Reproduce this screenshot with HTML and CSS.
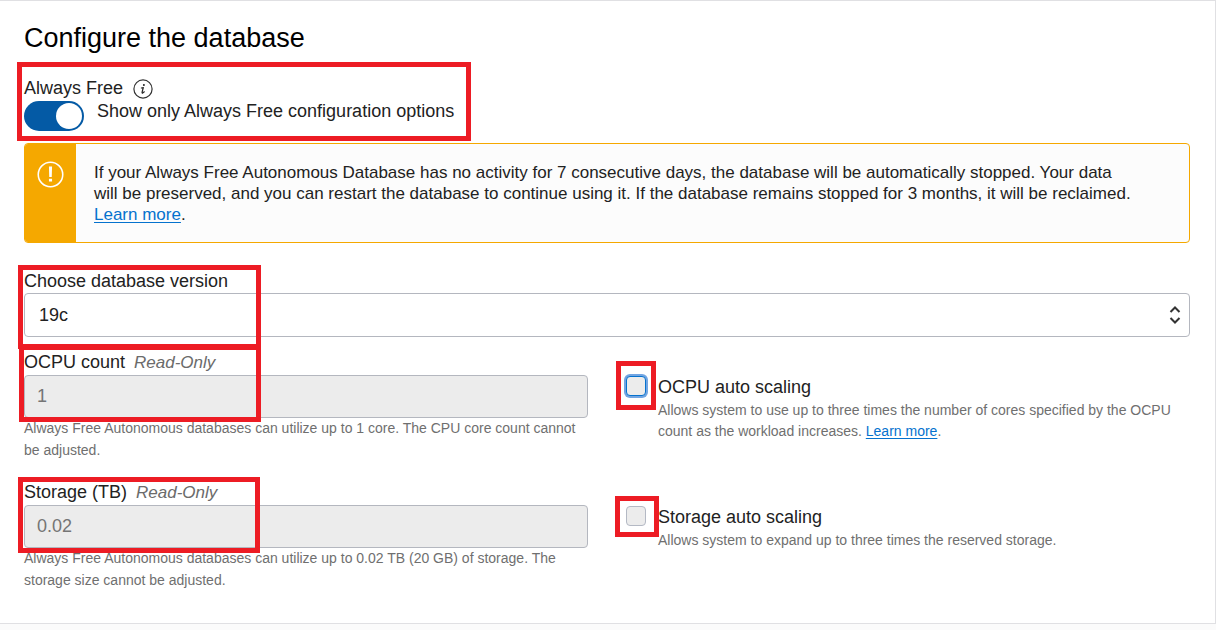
FILE: index.html
```html
<!DOCTYPE html>
<html lang="en">
<head>
<meta charset="utf-8">
<title>Configure the database</title>
<link rel="stylesheet" href="styles.css">
</head>
<body>
<main class="panel">
  <h1 class="title">Configure the database</h1>

  <section class="free marked">
    <div class="label-row">
      <span id="free-label">Always Free</span>
      <svg class="info" viewBox="0 0 20 20" aria-hidden="true">
        <circle cx="10" cy="10" r="9.1" fill="none" stroke="#333" stroke-width="1.2"/>
        <circle cx="10.9" cy="6" r="1" fill="#222"/>
        <path d="M8.4 9L10.3 8.5L9.1 13.2Q8.9 14.4 9.9 13.9L11.3 12.8" fill="none" stroke="#222" stroke-width="1.2" stroke-linecap="round" stroke-linejoin="round"/>
      </svg>
    </div>
    <div class="toggle-row">
      <input class="toggle" type="checkbox" role="switch" id="free" checked>
      <label for="free">Show only Always Free configuration options</label>
    </div>
    <span class="mark mark-free"></span>
  </section>

  <section class="alert">
    <div class="alert-side">
      <svg class="alert-icon" viewBox="0 0 26 26" aria-hidden="true">
        <circle cx="13" cy="13" r="11.8" fill="none" stroke="#fff" stroke-width="1.5"/>
        <path d="M11.5 5.2h3l-.3 10.2h-2.4zM11.5 17h3v2.7h-3z" fill="#fff"/>
      </svg>
    </div>
    <p class="alert-text">If your Always Free Autonomous Database has no activity for 7 consecutive days, the database will be automatically stopped. Your data<br> will be preserved, and you can restart the database to continue using it. If the database remains stopped for 3 months, it will be reclaimed.<br> <a href="#">Learn more</a>.</p>
  </section>

  <section class="version marked">
    <label class="label" for="version">Choose database version</label>
    <div class="select-wrap">
      <select class="select" id="version"><option>19c</option></select>
      <svg class="arrows" viewBox="0 0 12 20" aria-hidden="true">
        <path d="M1.5 7L6 2.5L10.5 7M1.5 13L6 17.5L10.5 13" fill="none" stroke="#333" stroke-width="2"/>
      </svg>
    </div>
    <span class="mark mark-version"></span>
  </section>

  <div class="grid">
    <section class="field marked">
      <label class="label" for="ocpu">OCPU count <em class="readonly">Read-Only</em></label>
      <input class="input" type="text" id="ocpu" value="1" readonly>
      <p class="hint">Always Free Autonomous databases can utilize up to 1 core. The CPU core count cannot be adjusted.</p>
      <span class="mark mark-ocpu"></span>
    </section>
    <section class="option marked">
      <input class="check check-focus" type="checkbox" id="ocpu-auto">
      <div class="option-text">
        <label class="label" for="ocpu-auto">OCPU auto scaling</label>
        <p class="note">Allows system to use up to three times the number of cores specified by the OCPU count as the workload increases. <a href="#">Learn more</a>.</p>
      </div>
      <span class="mark mark-ocpu-auto"></span>
    </section>
    <section class="field marked">
      <label class="label" for="storage">Storage (TB) <em class="readonly">Read-Only</em></label>
      <input class="input" type="text" id="storage" value="0.02" readonly>
      <p class="hint">Always Free Autonomous databases can utilize up to 0.02 TB (20 GB) of storage. The storage size cannot be adjusted.</p>
      <span class="mark mark-storage"></span>
    </section>
    <section class="option marked">
      <input class="check" type="checkbox" id="storage-auto" disabled>
      <div class="option-text">
        <label class="label" for="storage-auto">Storage auto scaling</label>
        <p class="note">Allows system to expand up to three times the reserved storage.</p>
      </div>
      <span class="mark mark-storage-auto"></span>
    </section>
  </div>
</main>
</body>
</html>
```
FILE: styles.css
```css
* { box-sizing: border-box; }

body {
  margin: 0;
  background: #fbfbfb;
  color: #222;
  font: 18px/21px "Liberation Sans", Arial, sans-serif;
}

p { margin: 0; }
a { color: #0572ce; text-underline-offset: 2px; }

.panel {
  padding: 21px 25px 32px 24px;
  background: #fff;
  border: solid #e0e0e3;
  border-width: 1px 1px 1px 0;
}

.title {
  margin: 0 0 24px;
  color: #000;
  font-size: 27px;
  font-weight: 400;
  line-height: 32px;
}

/* Red highlight frames drawn over the form */
.marked { position: relative; }
.mark {
  position: absolute;
  z-index: 1;
  border: 5px solid #ed1c24;
  pointer-events: none;
}
.mark-free { left: -7px; top: -16px; width: 454px; height: 79px; }
.mark-version { left: -6px; top: -6px; width: 243px; height: 84px; }
.mark-ocpu { left: -5px; top: -7px; width: 242px; height: 77px; }
.mark-storage { left: -6px; top: -5px; width: 242px; height: 76px; }
.mark-ocpu-auto { left: -10px; top: 9px; width: 40px; height: 49px; }
.mark-storage-auto { left: -11px; top: 14px; width: 44px; height: 41px; }

.label-row { display: flex; align-items: center; gap: 10px; height: 21px; }
.info { width: 20px; height: 20px; }

.toggle-row { display: flex; align-items: flex-start; gap: 13px; margin-top: 2px; }
.toggle {
  appearance: none;
  display: flex;
  flex: none;
  justify-content: flex-end;
  width: 60px;
  height: 30px;
  margin: 0;
  padding: 2px;
  border-radius: 15px;
  background: #045aa5;
}
.toggle::before {
  content: "";
  width: 26px;
  height: 26px;
  border-radius: 50%;
  background: #fff;
}
.toggle:not(:checked) { justify-content: flex-start; background: #8a8f98; }

.alert {
  display: flex;
  margin-top: 12px;
  border: 1px solid #f5a800;
  border-radius: 4px;
  background: #fcfcfc;
}
.alert-side {
  flex: none;
  width: 51px;
  padding: 17px 0 0 12px;
  border-radius: 3px 0 0 3px;
  background: #f5a800;
}
.alert-icon { display: block; width: 27px; height: 27px; }
.alert-text { padding: 18px 18px 17px; font-size: 17px; }

.version { margin-top: 28px; }
.label { display: block; }
.select-wrap { display: grid; align-items: center; margin-top: 1px; }
.select-wrap > * { grid-area: 1 / 1; }
.select {
  appearance: none;
  width: 100%;
  height: 44px;
  padding: 0 14px;
  border: 1px solid #b4b7bf;
  border-radius: 4px;
  background: #fff;
  color: #222;
  font: inherit;
}
.arrows {
  justify-self: end;
  width: 12px;
  height: 20px;
  margin-right: 9px;
  pointer-events: none;
}

.grid {
  display: grid;
  grid-template-columns: 1fr 1fr;
  gap: 21px 38px;
  margin-top: 15px;
}
.readonly { margin-left: 4px; color: #6b6b6b; font-size: 17px; }
.input {
  display: block;
  width: 100%;
  height: 43px;
  margin-top: 2px;
  padding: 0 12px;
  border: 1px solid #b4b7bf;
  border-radius: 4px;
  background: #ececec;
  color: #757575;
  font: inherit;
}
.hint, .note { color: #6f6f6f; font-size: 14px; }
.hint { margin-top: -1px; line-height: 22px; }
.note { margin-top: 2px; }

.option { display: flex; align-items: flex-start; gap: 12px; padding-top: 24px; }
.option-text { padding-top: 1px; }
.check {
  appearance: none;
  flex: none;
  width: 20px;
  height: 20px;
  margin: 0;
  border: 1px solid #b4b9c4;
  border-radius: 4px;
  background: #ececec;
}
.check-focus { border-color: #0572ce; box-shadow: 0 0 0 2px #72a5e2; }
```
